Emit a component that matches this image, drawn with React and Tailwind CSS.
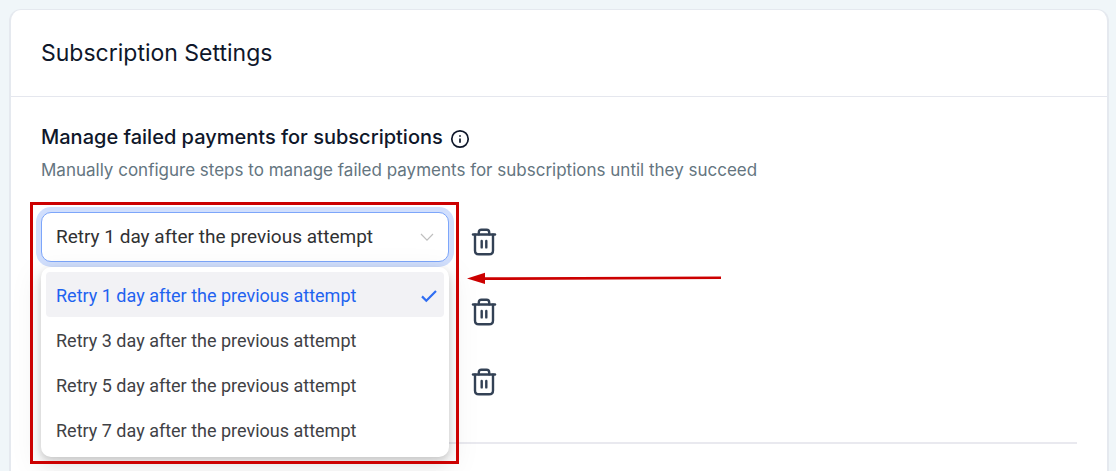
import React, { useState } from 'react';

const OPTIONS = [
  { value: 1, label: 'Retry 1 day after the previous attempt' },
  { value: 3, label: 'Retry 3 day after the previous attempt' },
  { value: 5, label: 'Retry 5 day after the previous attempt' },
  { value: 7, label: 'Retry 7 day after the previous attempt' },
];

const InfoIcon = () => (
  <svg width="20" height="20" viewBox="0 0 20 20" fill="none" stroke="#0f172a" strokeWidth="1.7">
    <circle cx="10" cy="10" r="8.2" />
    <path d="M10 9.4v4.4" />
    <path d="M10 6.2v1.5" />
  </svg>
);

const TrashIcon = () => (
  <svg width="28" height="30" viewBox="0 0 28 30" fill="none" stroke="#334155" strokeWidth="2.4" strokeLinecap="round">
    <path d="M3 7.5h22" />
    <path d="M8.8 7.2V5.4c0-1.7.9-2.6 2.6-2.6h5.2c1.7 0 2.6.9 2.6 2.6v1.8" />
    <path d="M5 7.8v15.6c0 2.6 1.3 3.9 3.9 3.9h10.2c2.6 0 3.9-1.3 3.9-3.9V7.8" />
    <path d="M11.7 14v6.4M16.3 14v6.4" />
  </svg>
);

const ChevronIcon = () => (
  <svg width="14" height="14" viewBox="0 0 14 14" fill="none" stroke="#bfbfbf" strokeWidth="1.2">
    <path d="M1 4l6 6.2L13 4" />
  </svg>
);

const CheckIcon = () => (
  <svg width="16" height="14" viewBox="0 0 16 14" fill="none" stroke="#2f6df2" strokeWidth="2.2">
    <path d="M1 7.4l4.3 4.3L15 2" />
  </svg>
);

// Menu shown under the select that is open
const RetryMenu = ({ value, onSelect }) => (
  <ul
    role="listbox"
    aria-label="Retry options"
    className="absolute inset-x-0 top-[55px] z-10 rounded-[10px] bg-white p-[5px] shadow-[0_6px_16px_rgba(0,0,0,0.08),0_3px_6px_rgba(0,0,0,0.12),0_9px_28px_8px_rgba(0,0,0,0.05)]"
  >
    {OPTIONS.map((option) => {
      const selected = option.value === value;
      return (
        <li key={option.value}>
          <button
            type="button"
            role="option"
            aria-selected={selected}
            onClick={() => onSelect(option.value)}
            className={
              selected
                ? 'flex h-[45px] w-full items-center justify-between rounded bg-[#f2f2f5] pl-2.5 pr-[7px] pt-0.5 text-left text-[18px] text-[#1f63f0]'
                : 'flex h-[45px] w-full items-center justify-between rounded pl-2.5 pr-[7px] pt-0.5 text-left text-[18px] text-[#3f4145]'
            }
          >
            {option.label}
            {selected && <CheckIcon />}
          </button>
        </li>
      );
    })}
  </ul>
);

// Red frame and arrow that point out the open drop-down
const Callout = () => (
  <>
    <div className="pointer-events-none absolute -left-[11px] -top-[10px] z-20 h-[262px] w-[429px] border-[3px] border-[#cc0000]" />
    <svg
      className="pointer-events-none absolute left-[426px] top-[60px] z-20"
      width="256"
      height="12"
      viewBox="0 0 256 12"
      fill="#cc0000"
    >
      <path d="M0 6.5L18 0.8V12z" />
      <path d="M16 5.3L254 4.5v2.4L16 8z" />
    </svg>
  </>
);

const RetryStep = ({ index, value, open, onChange, onDelete }) => (
  <div className="relative flex h-[50px] items-end gap-[21px]">
    <div className="relative w-[408px] font-[Roboto,sans-serif]">
      {/* the open menu covers the other selects, so they are hidden meanwhile */}
      <select
        aria-label={`Retry step ${index + 1}`}
        value={value}
        onChange={(e) => onChange(Number(e.target.value))}
        className={
          open
            ? 'h-[50px] w-full appearance-none rounded-[10px] border border-[#7da6fa] bg-white pl-3.5 pr-10 text-[19px] text-[#303133] shadow-[0_0_0_5px_#d1dffd] outline-none'
            : 'invisible h-[50px] w-full appearance-none rounded-[10px] border border-[#d9d9d9] bg-white pl-3.5 pr-10 text-[19px] text-[#303133] outline-none'
        }
      >
        {OPTIONS.map((option) => (
          <option key={option.value} value={option.value}>
            {option.label}
          </option>
        ))}
      </select>
      <div className="pointer-events-none absolute inset-y-0 right-[15px] flex items-center">
        <ChevronIcon />
      </div>
      {open && <RetryMenu value={value} onSelect={onChange} />}
    </div>
    <button type="button" aria-label="Delete step" onClick={onDelete} className="pb-[5px]">
      <TrashIcon />
    </button>
    {open && <Callout />}
  </div>
);

const App = () => {
  const [steps, setSteps] = useState([
    { id: 'a', value: 1 },
    { id: 'b', value: 3 },
    { id: 'c', value: 5 },
  ]);

  const updateStep = (id, value) => {
    setSteps(steps.map((step) => (step.id === id ? { ...step, value } : step)));
  };

  const deleteStep = (id) => {
    setSteps(steps.filter((step) => step.id !== id));
  };

  return (
    <main className="flex min-h-screen flex-col bg-[#f0f6f9] pl-[9px] pr-[7px] pt-[9px] font-[Inter,sans-serif]">
      <section className="flex-1 rounded-t-[12px] border-x-2 border-t border-[#e5e9ef] bg-white">
        <header className="border-b border-[#e5e7ee] px-[30px] py-7">
          <h1 className="text-[23px] font-normal leading-[30px] text-[#0f172a]">Subscription Settings</h1>
        </header>
        <div className="px-[30px] pt-[25px]">
          <div className="flex items-center gap-[7px]">
            <h2 className="text-[20px] font-medium leading-[30px] text-[#0f172a]">
              Manage failed payments for subscriptions
            </h2>
            <button type="button" aria-label="More information" className="pt-1">
              <InfoIcon />
            </button>
          </div>
          <p className="mt-1.5 text-[17px] leading-6 text-[#64757f]">
            Manually configure steps to manage failed payments for subscriptions until they succeed
          </p>
          <div className="mt-[30px] flex flex-col gap-5">
            {steps.map((step, index) => (
              <RetryStep
                key={step.id}
                index={index}
                value={step.value}
                open={index === 0}
                onChange={(value) => updateStep(step.id, value)}
                onDelete={() => deleteStep(step.id)}
              />
            ))}
          </div>
          <hr className="mt-10 border-t-2 border-[#e9e9ef]" />
        </div>
      </section>
    </main>
  );
};

export default App;
